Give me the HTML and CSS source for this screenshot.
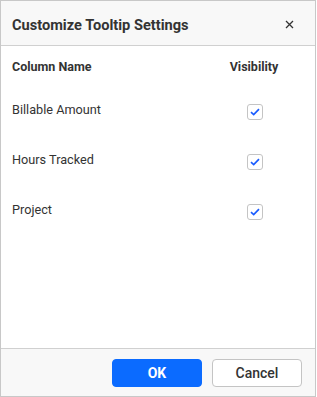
FILE: index.html
```html
<!DOCTYPE html>
<html>
<head>
<meta charset="utf-8">
<link rel="stylesheet" href="styles.css">
</head>
<body>
<div class="dialog">
  <div class="dlg-header">
    <span class="dlg-title">Customize Tooltip Settings</span>
    <span class="dlg-close">
      <svg width="9" height="9" viewBox="0 0 9 9"><path d="M1 1 L8 8 M8 1 L1 8" stroke="#333" stroke-width="1.3" fill="none"/></svg>
    </span>
  </div>
  <div class="dlg-body">
    <div class="row head-row">
      <span class="col-name">Column Name</span>
      <span class="col-vis">Visibility</span>
    </div>
    <div class="row">
      <span class="col-name">Billable Amount</span>
      <span class="col-vis"><span class="cb"><svg width="10" height="8" viewBox="0 0 10 8"><path d="M1 4.2 L3.7 6.6 L9 1.2" stroke="#1a5cff" stroke-width="1.7" fill="none"/></svg></span></span>
    </div>
    <div class="row">
      <span class="col-name">Hours Tracked</span>
      <span class="col-vis"><span class="cb"><svg width="10" height="8" viewBox="0 0 10 8"><path d="M1 4.2 L3.7 6.6 L9 1.2" stroke="#1a5cff" stroke-width="1.7" fill="none"/></svg></span></span>
    </div>
    <div class="row">
      <span class="col-name">Project</span>
      <span class="col-vis"><span class="cb"><svg width="10" height="8" viewBox="0 0 10 8"><path d="M1 4.2 L3.7 6.6 L9 1.2" stroke="#1a5cff" stroke-width="1.7" fill="none"/></svg></span></span>
    </div>
  </div>
  <div class="dlg-footer">
    <button class="btn btn-primary">OK</button>
    <button class="btn btn-secondary">Cancel</button>
  </div>
</div>
</body>
</html>
```
FILE: styles.css
```css
html, body {
  margin: 0;
  padding: 0;
  background: #fff;
}
body {
  font-family: Roboto, "Liberation Sans", sans-serif;
  color: #333;
}
.dialog {
  width: 316px;
  height: 397px;
  box-sizing: border-box;
  border: 1px solid #c8c8c8;
  display: flex;
  flex-direction: column;
  background: #fff;
}
.dlg-header {
  height: 44px;
  flex: none;
  background: #f8f8f8;
  border-bottom: 1px solid #d0d0d0;
  display: flex;
  align-items: center;
  justify-content: space-between;
  padding: 0 21px 0 11px;
}
.dlg-title {
  font-size: 14.6px;
  font-weight: 700;
  color: #333;
  margin-top: 4px;
}
.dlg-close {
  display: flex;
  margin-top: 3px;
}
.dlg-body {
  flex: 1;
  padding: 0 0 0 11px;
}
.row {
  display: flex;
  align-items: center;
  height: 50px;
  font-size: 12.7px;
}
.head-row {
  height: 40px;
  font-weight: 700;
  font-size: 12.5px;
}
.col-name {
  flex: 1;
}
.col-vis {
  width: 60px;
  margin-right: 31px;
  display: flex;
  justify-content: center;
}
.row:not(.head-row) .col-name {
  margin-top: -3px;
}
.cb {
  width: 14px;
  height: 14px;
  border: 1px solid #c4c4c4;
  border-radius: 3px;
  display: flex;
  align-items: center;
  justify-content: center;
  margin-top: 2px;
  margin-left: 1px;
  background: #fff;
}
.dlg-footer {
  flex: none;
  height: 48px;
  background: #f8f8f8;
  border-top: 1px solid #d0d0d0;
  display: flex;
  justify-content: flex-end;
  align-items: flex-start;
  gap: 10px;
  padding: 10px 13px 0 0;
  box-sizing: border-box;
}
.btn {
  width: 90px;
  height: 28px;
  border-radius: 4px;
  font-family: Roboto, "Liberation Sans", sans-serif;
  font-size: 14px;
  cursor: pointer;
}
.btn-primary {
  background: #0b6bff;
  border: 1px solid #0b6bff;
  color: #fff;
  font-weight: 700;
}
.btn-secondary {
  background: #fff;
  border: 1px solid #c4c4c4;
  color: #333;
  font-weight: 500;
}
```
